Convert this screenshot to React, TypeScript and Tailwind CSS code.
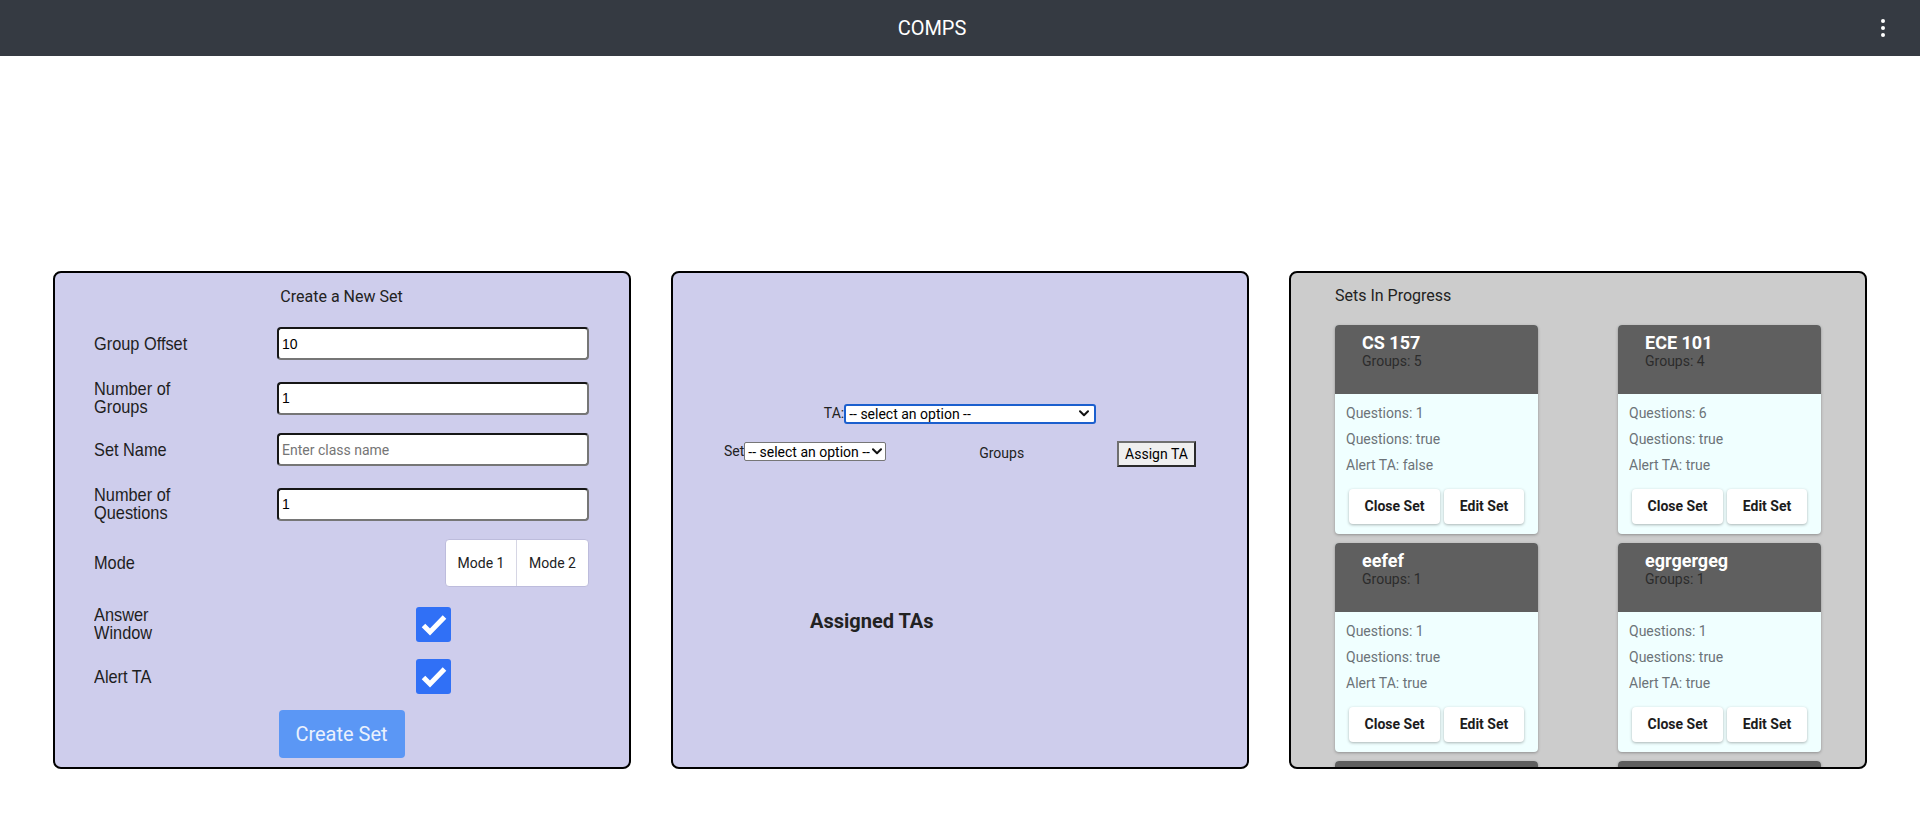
import React from 'react';

type SetInfo = {
    name: string;
    groups: number;
    questions: number;
    answerWindow: boolean;
    alertTA: boolean;
};

const sets: SetInfo[] = [
    { name: 'CS 157', groups: 5, questions: 1, answerWindow: true, alertTA: false },
    { name: 'ECE 101', groups: 4, questions: 6, answerWindow: true, alertTA: true },
    { name: 'eefef', groups: 1, questions: 1, answerWindow: true, alertTA: true },
    { name: 'egrgergeg', groups: 1, questions: 1, answerWindow: true, alertTA: true },
    { name: 'wefwef', groups: 1, questions: 1, answerWindow: true, alertTA: true },
    { name: 'sdfsdf', groups: 1, questions: 1, answerWindow: true, alertTA: true },
];

// labels in the original use a condensed face; squeeze Liberation Sans to match
const labelFont = "block w-[112px] origin-left scale-x-[0.86] font-['Liberation_Sans',sans-serif] text-[19px] leading-[18px] text-[#1e1e1e]";

const Chevron = () => (
    <svg width="10" height="7" viewBox="0 0 10 7" className="shrink-0">
        <path d="M1 1.2l4 4 4-4" fill="none" stroke="#111" strokeWidth="2" strokeLinecap="round" strokeLinejoin="round" />
    </svg>
);

const CheckBox = () => (
    <span className="block h-[35px] w-[35px] rounded-[3px] bg-[#3070f6]">
        <svg width="35" height="35" viewBox="0 0 35 35">
            <path d="M7.5 18.5L14 25L28.5 10" fill="none" stroke="white" strokeWidth="5" strokeLinecap="butt" strokeLinejoin="miter" />
        </svg>
    </span>
);

const TextField = ({ value, placeholder }: { value?: string; placeholder?: string }) => (
    <input
        type="text"
        defaultValue={value}
        placeholder={placeholder}
        className="h-[33px] w-full rounded-[4px] border-2 border-t-[#161616] border-l-[#161616] border-r-[#767676] border-b-[#767676] bg-white px-[3px] font-['Liberation_Sans',sans-serif] text-[14px] text-black placeholder:font-['Roboto'] placeholder:text-[#757575] focus:outline-none"
    />
);

const FormRow = ({ label, children, className }: { label: string; children: React.ReactNode; className: string }) => (
    <div className={`grid grid-cols-[183px_1fr] items-center ${className}`}>
        <span className={labelFont}>{label}</span>
        {children}
    </div>
);

const CreateSetPanel = () => (
    <div className="h-[498px] w-[578px] rounded-[8px] border-2 border-black bg-[#cecdec] pl-[39px] pr-[40px]">
        <h2 className="pt-[14px] text-center text-[16px] leading-[19px] text-[#222]">Create a New Set</h2>
        <FormRow label="Group Offset" className="mt-[21px] h-[33px]">
            <TextField value="10" />
        </FormRow>
        <FormRow label="Number of Groups" className="mt-[20px] h-[33px]">
            <TextField value="1" />
        </FormRow>
        <FormRow label="Set Name" className="mt-[20px] h-[33px]">
            <TextField placeholder="Enter class name" />
        </FormRow>
        <FormRow label="Number of Questions" className="mt-[20px] h-[33px]">
            <TextField value="1" />
        </FormRow>
        <FormRow label="Mode" className="mt-[20px] h-[48px]">
            <div className="flex justify-end">
                <div className="flex h-[48px] overflow-hidden rounded-[4px] border border-[#bdbcdc] bg-white text-[14px] text-[#222]">
                    <button className="w-[71px] border-r border-[#d6d6e4]">Mode 1</button>
                    <button className="w-[71px]">Mode 2</button>
                </div>
            </div>
        </FormRow>
        <FormRow label="Answer Window" className="mt-[19px] h-[35px]">
            <div className="flex justify-center">
                <CheckBox />
            </div>
        </FormRow>
        <FormRow label="Alert TA" className="mt-[18px] h-[35px]">
            <div className="flex justify-center">
                <CheckBox />
            </div>
        </FormRow>
        <div className="mt-[16px] flex justify-center">
            <button className="h-[48px] w-[126px] rounded-[4px] bg-[#5b97f5] text-[20px] text-[#eaf1fd]">Create Set</button>
        </div>
    </div>
);

const AssignPanel = () => (
    <div className="h-[498px] w-[578px] rounded-[8px] border-2 border-black bg-[#cecdec] text-[14px] text-[#222]">
        <div className="flex items-center justify-center pt-[130px]">
            <label>TA:</label>
            <div className="flex h-[20px] w-[252px] items-center justify-between rounded-[3px] border-2 border-[#1b5fce] bg-white pl-[3px] pr-[5px]">
                <select className="flex-1 appearance-none bg-transparent leading-[16px] text-black outline-none">
                    <option>-- select an option --</option>
                </select>
                <Chevron />
            </div>
        </div>
        <div className="mt-[17px] flex items-start justify-between px-[51px]">
            <div className="flex items-center">
                <label>Set</label>
                <div className="flex h-[19px] items-center gap-[2px] rounded-[2px] border border-[#767676] bg-white pl-[3px] pr-[3px]">
                    <select className="appearance-none bg-transparent leading-[16px] text-black outline-none">
                        <option>-- select an option --</option>
                    </select>
                    <Chevron />
                </div>
            </div>
            <span className="mt-[2px]">Groups</span>
            <button className="h-[26px] w-[79px] border-2 border-t-[#6f6f6f] border-l-[#6f6f6f] border-r-[#2b2b2b] border-b-[#2b2b2b] bg-[#efefef] text-black">Assign TA</button>
        </div>
        <h3 className="ml-[137px] mt-[143px] text-[20px] font-bold leading-[23px] text-[#222]">Assigned TAs</h3>
    </div>
);

const SetCard = ({ set }: { set: SetInfo }) => (
    <div className="w-[203px] overflow-hidden rounded-[4px] bg-[#f0ffff] shadow-[0_1px_3px_rgba(0,0,0,0.3)]">
        <div className="h-[69px] bg-[#5f5f5f] pl-[27px] pt-[7px]">
            <div className="text-[18px] font-bold leading-[21px] text-white">{set.name}</div>
            <div className="text-[14px] leading-[16px] text-[#2c2c2c]">Groups: {set.groups}</div>
        </div>
        <div className="px-[11px] pb-[11px] pt-[6px] text-[14px] leading-[26px] text-[#6c7378]">
            <p>Questions: {set.questions}</p>
            <p>Questions: {String(set.answerWindow)}</p>
            <p>Alert TA: {String(set.alertTA)}</p>
        </div>
        <div className="flex justify-center gap-[4px] pb-[10px]">
            <button className="h-[35px] w-[91px] rounded-[4px] bg-white text-[14px] font-bold text-[#1c1c1c] shadow-[0_1px_3px_rgba(0,0,0,0.3)]">Close Set</button>
            <button className="h-[35px] w-[80px] rounded-[4px] bg-white text-[14px] font-bold text-[#1c1c1c] shadow-[0_1px_3px_rgba(0,0,0,0.3)]">Edit Set</button>
        </div>
    </div>
);

const SetsPanel = () => (
    <div className="h-[498px] w-[578px] overflow-hidden rounded-[8px] border-2 border-black bg-[#cccccc]">
        <h2 className="pl-[44px] pt-[13px] text-[16px] leading-[19px] text-[#222]">Sets In Progress</h2>
        <div className="mt-[20px] grid grid-cols-2 justify-items-center gap-y-[9px] px-[4px]">
            {sets.map(s => (
                <SetCard key={s.name} set={s} />
            ))}
        </div>
    </div>
);

export default function App() {
    return (
        <div className="min-h-screen bg-white font-['Roboto',sans-serif]">
            <header className="flex h-[56px] items-center bg-[#353a42] pr-[13px]">
                <h1 className="flex-1 pl-[5px] text-center text-[20px] text-white">COMPS</h1>
                <button className="flex h-[48px] w-[48px] items-center justify-center">
                    <svg width="6" height="20" viewBox="0 0 6 20">
                        <circle cx="3" cy="3" r="2" fill="white" />
                        <circle cx="3" cy="10" r="2" fill="white" />
                        <circle cx="3" cy="17" r="2" fill="white" />
                    </svg>
                </button>
            </header>
            <main className="mt-[215px] flex gap-[40px] px-[53px]">
                <CreateSetPanel />
                <AssignPanel />
                <SetsPanel />
            </main>
        </div>
    );
}
